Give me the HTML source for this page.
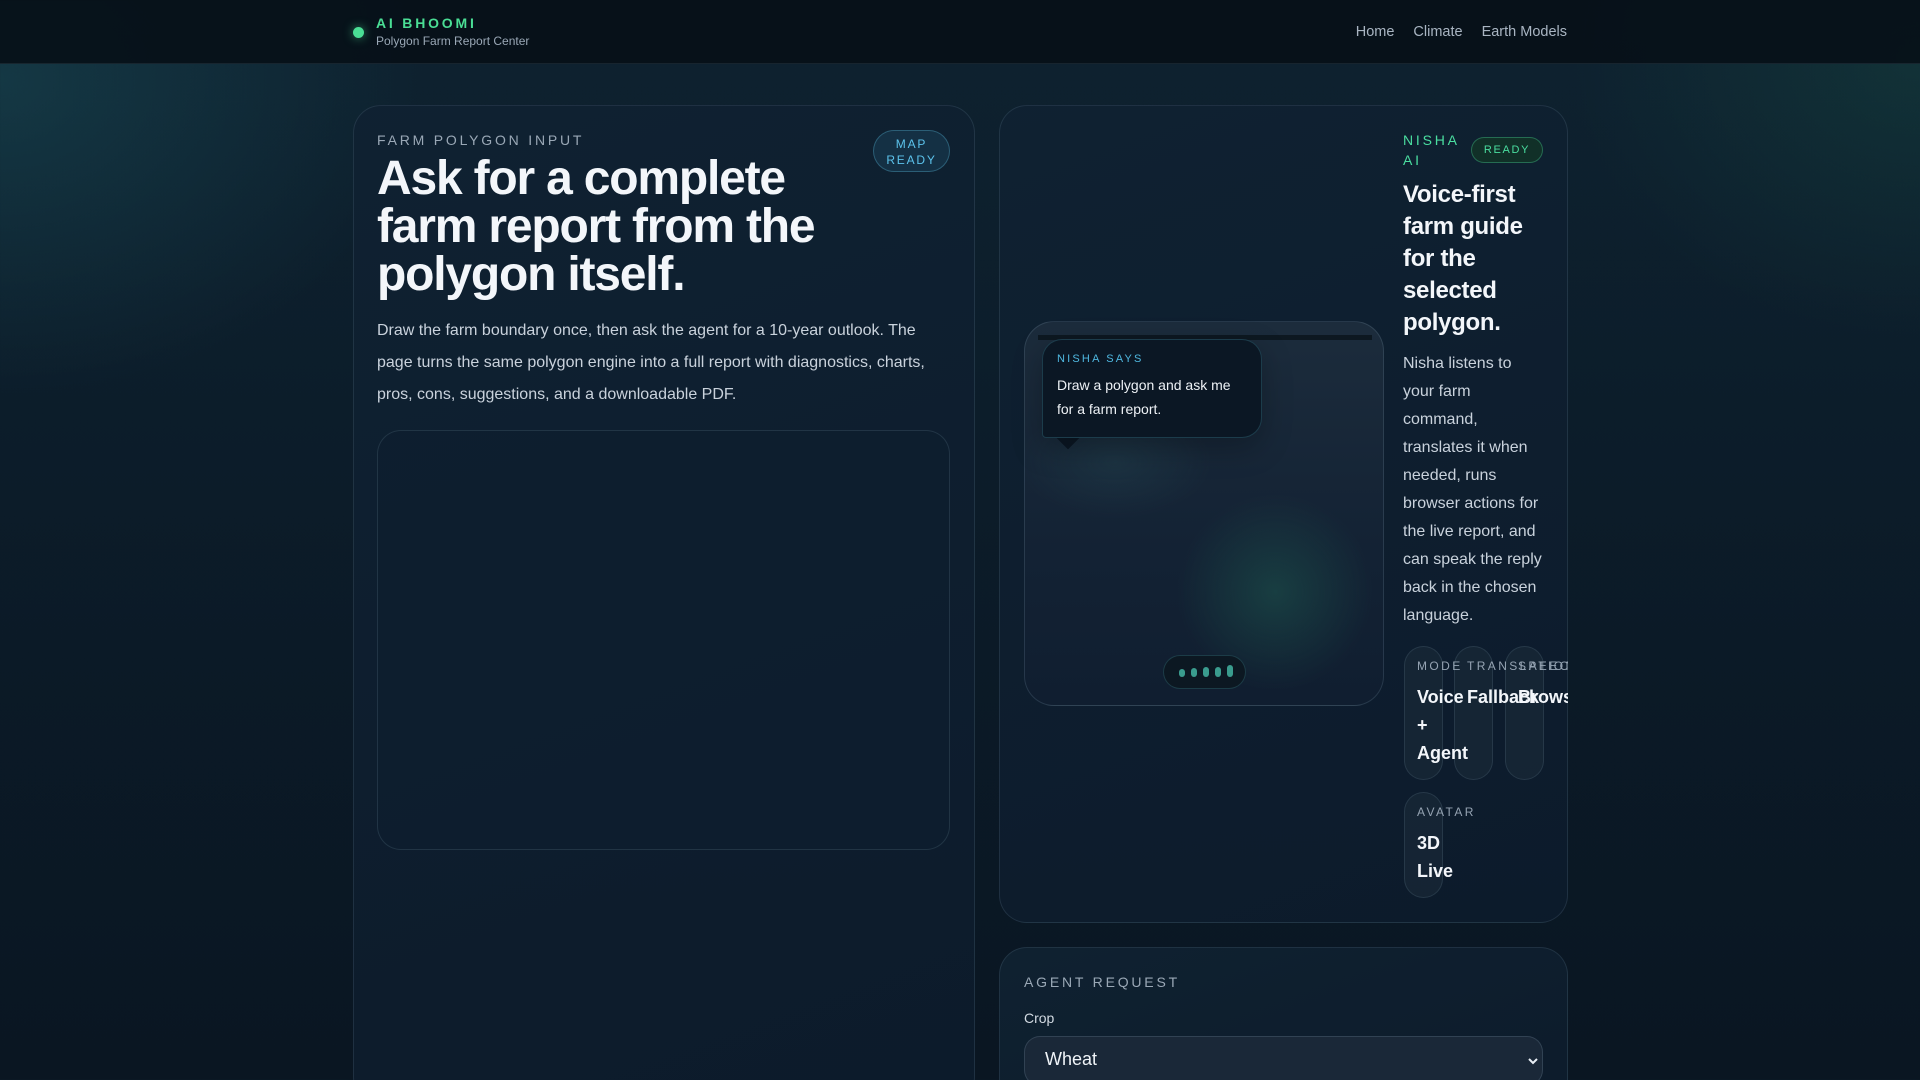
<!DOCTYPE html>
<html><head><meta charset="utf-8"><style>
*{box-sizing:border-box;margin:0;padding:0}
html,body{width:1920px;height:1080px;overflow:hidden}
body{font-family:"Liberation Sans",sans-serif;color:#e8eef4;
background:radial-gradient(ellipse 600px 450px at 0px 80px,rgba(30,90,100,.4),transparent 70%),
radial-gradient(ellipse 500px 400px at 1920px 60px,rgba(30,100,80,.25),transparent 70%),
linear-gradient(180deg,#0e2230 0%,#0b1a27 60%,#0a1622 100%);position:relative}
.nav{position:absolute;left:0;top:0;width:1920px;height:64px;background:rgba(6,16,24,.92);border-bottom:1px solid rgba(120,150,170,.15)}
.dot{position:absolute;left:353px;top:27px;width:11px;height:11px;border-radius:50%;background:#4ade95;box-shadow:0 0 10px rgba(74,222,149,.6)}
.brand{position:absolute;left:376px;top:15px;font-size:14px;font-weight:bold;letter-spacing:.2em;color:#4ade95}
.sub{position:absolute;left:376px;top:34px;font-size:12px;color:#9aa8b6}
.links{position:absolute;right:353px;top:24px;font-size:14.5px;color:#a9b5c2}
.links span{margin-left:19px}
.card{position:absolute;border:1px solid rgba(130,160,180,.16);border-radius:28px;background:linear-gradient(160deg,rgba(16,34,50,.95),rgba(13,27,44,.95));overflow:hidden}
.lbl{font-size:14px;letter-spacing:.2em;color:#9aa8b6}
h1{position:absolute;left:377px;top:155px;width:470px;font-size:48px;line-height:48px;letter-spacing:-1.2px;font-weight:bold;color:#f3f6fa}
.p1{position:absolute;left:377px;top:315px;width:560px;font-size:16px;line-height:32px;color:#c9d2dc}
.map{position:absolute;left:377px;top:430px;width:573px;height:420px;border:1px solid rgba(130,160,180,.18);border-radius:24px;background:rgba(14,30,46,.6)}
.badge{position:absolute;border-radius:22px;font-size:12px;letter-spacing:.15em;text-align:center}
.stage{position:absolute;left:1024px;top:321px;width:360px;height:385px;border:1px solid rgba(130,160,180,.2);border-radius:30px;
background:radial-gradient(circle 130px at 250px 270px,rgba(30,90,80,.5),transparent 75%),radial-gradient(ellipse 120px 70px at 90px 140px,rgba(40,80,90,.3),transparent 80%),linear-gradient(180deg,#1c2c3c,#132234 60%,#101e30)}
.bar{position:absolute;left:13px;top:13px;width:334px;height:5px;background:#0d1821}
.bub{position:absolute;left:17px;top:17px;width:220px;height:99px;border:1px solid rgba(60,130,150,.35);border-radius:20px 20px 20px 4px;background:#0b1724;padding:13px 0 0 14px;box-shadow:0 10px 30px rgba(0,0,0,.25)}
.tail{position:absolute;left:35px;top:108px;width:16px;height:16px;background:#0b1724;transform:rotate(45deg)}
.bt{font-size:11px;letter-spacing:.2em;color:#4fb8e0}
.bx{font-size:14px;line-height:24px;color:#eef2f6;margin-top:8px}
.pill{position:absolute;left:138px;top:333px;width:83px;height:34px;border-radius:17px;border:1px solid rgba(60,130,140,.35);background:#0c1822}
.pill i{position:absolute;width:6px;border-radius:3px;background:#3a9c8e}
.col{position:absolute;left:1403px}
.h2{position:absolute;left:1403px;top:179px;width:140px;font-size:24px;line-height:32px;font-weight:bold;color:#f3f6fa;letter-spacing:-.3px}
.p2{position:absolute;left:1403px;top:350px;width:140px;font-size:16px;line-height:28px;color:#c9d2dc}
.mini{position:absolute;width:39px;border:1px solid rgba(130,160,180,.16);border-radius:20px;background:rgba(30,45,60,.5)}
.ml{position:absolute;font-size:12px;letter-spacing:.2em;color:#95a3b2;white-space:nowrap}
.mv{position:absolute;font-size:18px;line-height:28px;font-weight:bold;color:#f3f6fa;white-space:nowrap}
.sel{position:absolute;left:1024px;top:1036px;width:519px;height:50px;border:1px solid rgba(130,160,180,.22);border-radius:16px;background:#1a2838;font-size:18px;color:#f0f4f8;padding:12px 0 0 20px}
</style></head><body>
<div class="nav"><div class="dot"></div><div class="brand">AI BHOOMI</div><div class="sub">Polygon Farm Report Center</div>
<div class="links"><span>Home</span><span>Climate</span><span>Earth Models</span></div></div>

<div class="card" style="left:353px;top:105px;width:622px;height:1000px"></div>
<div class="lbl" style="position:absolute;left:377px;top:132px">FARM POLYGON INPUT</div>
<div class="badge" style="left:873px;top:130px;width:77px;height:42px;padding-top:5px;line-height:16px;border:1px solid rgba(70,150,180,.45);background:#143044;color:#5cc3ec">MAP<br>READY</div>
<h1>Ask for a complete farm report from the polygon itself.</h1>
<div class="p1">Draw the farm boundary once, then ask the agent for a 10-year outlook. The page turns the same polygon engine into a full report with diagnostics, charts, pros, cons, suggestions, and a downloadable PDF.</div>
<div class="map"></div>

<div class="card" style="left:999px;top:105px;width:569px;height:818px">
</div>
<div class="stage"><div class="bar"></div><div class="tail"></div><div class="bub"><div class="bt">NISHA SAYS</div><div class="bx">Draw a polygon and ask me<br>for a farm report.</div></div>
<div class="pill"><i style="left:15px;top:13px;height:8px"></i><i style="left:27px;top:12px;height:9px"></i><i style="left:39px;top:11px;height:10px"></i><i style="left:51px;top:11px;height:10px"></i><i style="left:63px;top:9px;height:12px"></i></div></div>
<div class="col" style="top:130px;font-size:14px;line-height:20px;letter-spacing:.2em;color:#4adea0;width:60px">NISHA AI</div>
<div class="badge" style="left:1471px;top:137px;width:72px;height:26px;line-height:24px;border:1px solid rgba(74,222,160,.35);background:#113028;color:#4adea0;font-size:11px">READY</div>
<div class="h2">Voice-first farm guide for the selected polygon.</div>
<div class="p2">Nisha listens to your farm command, translates it when needed, runs browser actions for the live report, and can speak the reply back in the chosen language.</div>
<div class="mini" style="left:1404px;top:646px;height:134px"></div>
<div class="mini" style="left:1454px;top:646px;height:134px"></div>
<div class="mini" style="left:1505px;top:646px;height:134px"></div>
<div class="mini" style="left:1404px;top:792px;height:106px"></div>
<div style="position:absolute;left:999px;top:105px;width:569px;height:818px;overflow:hidden;border-radius:28px">
<div class="ml" style="left:418px;top:554px">MODE</div>
<div class="mv" style="left:418px;top:578px">Voice<br>+<br>Agent</div>
<div class="ml" style="left:468px;top:554px">TRANSLATION</div>
<div class="mv" style="left:468px;top:578px">Fallback</div>
<div class="ml" style="left:519px;top:554px">SPEECH</div>
<div class="mv" style="left:519px;top:578px">Browser</div>
<div class="ml" style="left:418px;top:700px">AVATAR</div>
<div class="mv" style="left:418px;top:724px">3D<br>Live</div>
</div>

<div class="card" style="left:999px;top:947px;width:569px;height:200px"></div>
<div class="lbl" style="position:absolute;left:1024px;top:974px">AGENT REQUEST</div>
<div style="position:absolute;left:1024px;top:1010px;font-size:14px;color:#d2dae2">Crop</div>
<div class="sel">Wheat<svg style="position:absolute;right:4px;top:20px" width="10" height="8" viewBox="0 0 10 8"><path d="M1 2l4 4 4-4" stroke="#e8eef4" stroke-width="2" fill="none"/></svg></div>
</body></html>
